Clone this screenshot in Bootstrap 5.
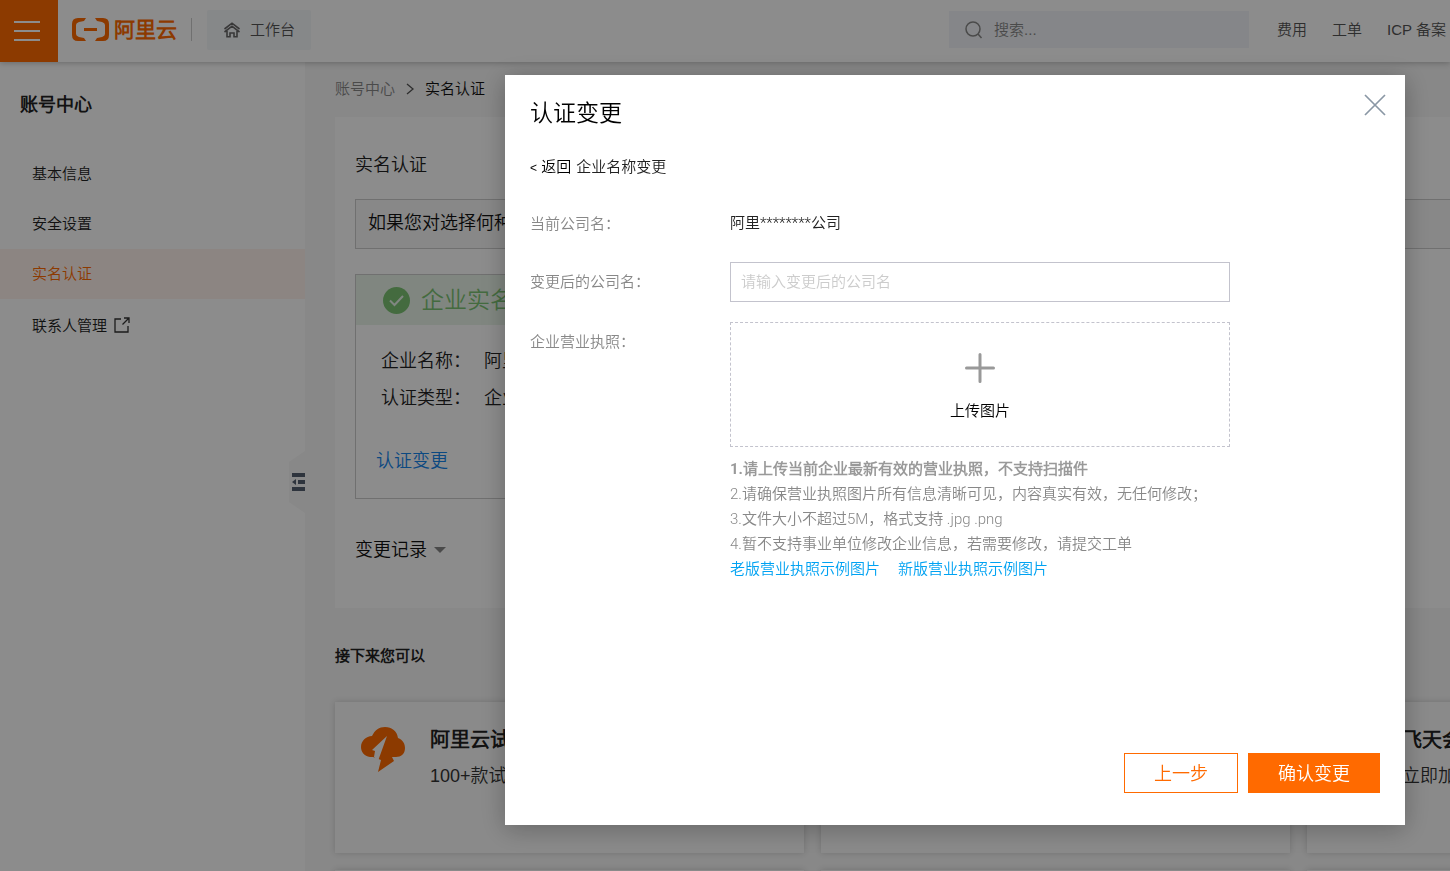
<!DOCTYPE html>
<html lang="zh-CN">
<head>
<meta charset="utf-8">
<meta name="viewport" content="width=device-width, initial-scale=1">
<title>实名认证</title>
<link href="https://cdn.jsdelivr.net/npm/bootstrap@5.3.0/dist/css/bootstrap.min.css" rel="stylesheet">
<style>
  :root { --brand: #ff6a00; --thin: 350; }
  body { font-family: "Liberation Sans", "Noto Sans CJK SC DemiLight", "Noto Sans CJK SC", sans-serif; font-size: 15px; font-weight: var(--thin); line-height: 25px; color: #222; background: #f7f7f7; height: 100vh; overflow: hidden; }
  a { text-decoration: none; color: inherit; }
  .fs-title { font-size: 23px; line-height: 30px; font-weight: var(--thin); }
  .fs-section { font-size: 18px; line-height: 26px; font-weight: var(--thin); }

  .topbar { height: 62px; background: #fff; box-shadow: 0 1px 6px rgba(0,0,0,.25); z-index: 2; position: relative; }
  .menu-btn { width: 58px; background: var(--brand); border: 0; padding: 0 4px 4px 0; }
  .top-row { padding-bottom: 3px; }
  .brand-link { margin-left: 14px; gap: 4px; }
  .brand-name { font-size: 21px; font-weight: 700; color: var(--brand); }
  .console-link { height: 40px; background: #f5f7fa; color: #555; border-radius: 2px; padding: 0 16px; margin-left: 15px; gap: 9px; }
  .v-line { width: 1px; height: 23px; background: #ccc; margin-left: 14px; }
  .search-box { width: 300px; height: 37px; background: #f2f5f9; padding-left: 16px; gap: 11px; color: #999; }
  .search-box input { background: none; border: 0; outline: 0; width: 220px; padding: 0; color: #888; font-weight: var(--thin); }
  .search-box input::placeholder { color: #888; }
  .top-links { gap: 25px; margin-left: 28px; padding-right: 4px; color: #555; }

  .sidebar { width: 305px; background: #fff; position: relative; padding-top: 30px; }
  .sidebar h2 { padding: 0 20px; margin-bottom: 31px; color: #222; }
  .sidebar .nav-link { height: 50px; padding: 0 32px 2px; color: #222; display: flex; align-items: center; gap: 7px; }
  .sidebar .nav-link.active { background: #fff3ed; color: var(--brand); }
  .sidebar .nav-link.outer { height: 54px; }
  .fold-btn { position: absolute; right: 0; top: 389px; border: 0; padding: 0; background: none; line-height: 0; }

  .content-wide { min-width: 1442px; padding: 14px 0 0 30px; }
  .crumbs { gap: 9px; margin-bottom: 16px; color: #111; }
  .crumbs a { color: #888; }
  .panel { background: #fff; padding: 35px 20px 45px; }
  .tip { height: 50px; border: 1px solid #ccc; background: #f7f7f7; padding: 0 12px 2px; margin: 21px 0 25px; color: #111; }
  .verify { border: 1px solid #ccc; height: 225px; margin-bottom: 38px; max-width: 900px; }
  .verify-head { height: 50px; background: #eaf5ea; color: #7cc474; padding-left: 27px; gap: 11px; }
  .verify dl { padding: 17px 25px 0; margin: 0; }
  .verify dl > div { height: 37px; gap: 12px; }
  .verify dt { font-weight: var(--thin); width: 91px; }
  .verify-link { color: #1585ec; margin: 32px 0 0 20px; display: inline-block; }
  .log-btn { border: 0; background: none; padding: 0; gap: 7px; color: #111; }
  .next-title { font-size: 15px; line-height: 25px; margin: 35px 0 34px; color: #222; }
  .next-grid { display: grid; grid-template-columns: repeat(3, 469px); gap: 17px; }
  .next-card { background: #fcfcfc; height: 151px; padding: 24px 25px; gap: 23px; box-shadow: 0 0 6px rgba(0,0,0,.16); color: #333; }
  .next-card h3 { font-size: 20px; line-height: 28px; font-weight: 700; margin: 0 0 9px; color: #222; }

  .modal { background: rgba(0,0,0,.45); overflow: hidden; }
  .change-dialog { max-width: 900px; margin: 75px 45px 46px auto; }
  .change-dialog .modal-content { border: 0; border-radius: 0; min-height: calc(100vh - 121px); padding: 23px 25px 32px; box-shadow: 0 4px 24px rgba(0,0,0,.28); }
  .close-btn { border: 0; background: none; padding: 0; width: 22px; height: 22px; line-height: 0; margin-right: -6px; margin-top: -4px; }
  .back-line { margin: 26px 0 30px; gap: 5px; }
  .back-line a { color: #000; }
  .back-line a span { font-size: 12px; }
  .field { display: grid; grid-template-columns: 200px 500px; margin-bottom: 20px; }
  .field > label, .field > .field-name { color: #888; padding-top: 7px; }
  .field.now { margin-bottom: 26px; }
  .field.now > .field-name { padding-top: 0; }
  .company, .notes { font-family: Roboto, "Noto Sans CJK SC DemiLight", "Noto Sans CJK SC", sans-serif; }
  .field .form-control { height: 40px; border: 1px solid #c3c3cd; border-radius: 0; padding: 0 10px 2px; font-size: 15px; font-weight: var(--thin); }
  .field .form-control::placeholder { color: #ccc; }
  .upload { height: 125px; width: 100%; border: 1px dashed #c3c3cd; background: #fff; color: #000; gap: 15px; padding: 7px 0 0; font-weight: var(--thin); }
  .notes { color: #888; margin-top: 10px; }
  .notes .fw-bold { color: #999; }
  .notes a { color: #00a2f2; }
  .note-links { gap: 18px; }
  .btn-row { gap: 10px; }
  .btn-flow { height: 40px; border-radius: 0; border: 1px solid var(--brand); padding: 1px 29px 0; line-height: 36px; font-size: 18px; font-weight: var(--thin); color: var(--brand); background: #fff; }
  .btn-flow.solid { background: var(--brand); color: #fff; }
</style>
</head>
<body class="d-flex flex-column">

<header class="topbar d-flex align-items-stretch flex-shrink-0">
  <button class="menu-btn" type="button" aria-label="菜单">
    <svg width="26" height="22" viewBox="0 0 26 22" stroke="#fff" stroke-width="2"><path d="M0 2h26M0 11h26M0 20h26"/></svg>
  </button>
  <div class="top-row d-flex align-items-center">
    <a href="#" class="brand-link d-flex align-items-center">
      <svg width="38" height="25" viewBox="0 0 38 25" fill="#ff6a00"><path d="M14 1H6Q0 1 0 7v11q0 6 6 6h8l-2-3-5-1q-3-1-3-3V8q0-2 3-3l5-1zM23 1h8q6 0 6 6v11q0 6-6 6h-8l2-3 5-1q3-1 3-3V8q0-2-3-3l-5-1zM12 11h13v3H12z"/></svg>
      <span class="brand-name">阿里云</span>
    </a>
    <span class="v-line"></span>
    <a href="#" class="console-link d-flex align-items-center">
      <svg width="18" height="16" viewBox="0 0 18 16" fill="none" stroke="#666" stroke-width="1.600"><path d="M1.500 7 9 1.200 16.500 7M1.500 10 9 4.200l7.500 5.800M4 9v5.800h3V11h4v3.800h3V9"/></svg>
      工作台
    </a>
  </div>
  <div class="top-row d-flex align-items-center ms-auto">
    <div class="search-box d-flex align-items-center">
      <svg width="18" height="18" viewBox="0 0 18 18" fill="none" stroke="#888" stroke-width="1.500"><circle cx="8" cy="8" r="7"/><path d="m13 13 3.500 4"/></svg>
      <input type="search" placeholder="搜索..." aria-label="搜索">
    </div>
    <nav class="top-links d-flex text-nowrap">
      <a href="#">费用</a><a href="#">工单</a><a href="#">ICP 备案</a>
    </nav>
  </div>
</header>

<div class="d-flex flex-grow-1 overflow-hidden">
  <aside class="sidebar flex-shrink-0">
    <h2 class="fs-section fw-bold">账号中心</h2>
    <nav class="nav flex-column">
      <a class="nav-link" href="#">基本信息</a>
      <a class="nav-link" href="#">安全设置</a>
      <a class="nav-link active" href="#">实名认证</a>
      <a class="nav-link outer" href="#">联系人管理
        <svg width="16" height="16" viewBox="0 0 16 16" fill="none" stroke="#333" stroke-width="1.300"><path d="M7 2H1v13h13V9M10 1h5v5M15 1 8.500 7.500"/></svg>
      </a>
    </nav>
    <button class="fold-btn" type="button" aria-label="收起">
      <svg width="16" height="62" viewBox="0 0 16 62"><path d="M16 0v62L0 51V11z" fill="#f7f7f7"/><path d="M3 22h13v4H3zM9 29h7v4H9zM3 36h13v4H3zM3 31l4-3v6z" fill="#556070"/></svg>
    </button>
  </aside>

  <main class="flex-grow-1 overflow-hidden">
    <div class="content-wide">
      <nav class="crumbs d-flex align-items-center" aria-label="breadcrumb">
        <a href="#">账号中心</a>
        <svg width="12" height="12" viewBox="0 0 12 12" fill="none" stroke="#555" stroke-width="1.300"><path d="m3 1 6 5-6 5"/></svg>
        <span>实名认证</span>
      </nav>
      <section class="panel">
        <h1 class="fs-section mb-0">实名认证</h1>
        <div class="tip fs-section d-flex align-items-center">如果您对选择何种</div>
        <div class="verify fs-section">
          <div class="verify-head fs-title d-flex align-items-center">
            <svg width="27" height="27" viewBox="0 0 27 27"><circle cx="13.500" cy="13.500" r="13.500" fill="#7cc474"/><path d="m7 13.500 4.500 4.500L20 9" fill="none" stroke="#eaf5ea" stroke-width="2"/></svg>
            企业实名
          </div>
          <dl>
            <div class="d-flex align-items-center"><dt>企业名称：</dt><dd class="mb-0">阿里</dd></div>
            <div class="d-flex align-items-center"><dt>认证类型：</dt><dd class="mb-0">企业</dd></div>
          </dl>
          <a href="#" class="verify-link">认证变更</a>
        </div>
        <button type="button" class="log-btn fs-section d-flex align-items-center">变更记录
          <svg width="12" height="6" viewBox="0 0 12 6"><path d="M0 0h12L6 6z" fill="#888"/></svg>
        </button>
      </section>
      <h2 class="next-title fw-bold">接下来您可以</h2>
      <div class="next-grid">
        <a href="#" class="next-card d-flex align-items-start">
          <svg width="47" height="47" viewBox="0 0 47 47" fill="#ff6a00"><path d="M13 31H10C4 30 1 26 1 21c0-6 5-11 11-11C15 4 19 1 25 1c7 0 12 4 13 11 5 2 7 6 7 10 0 6-4 9-9 9h-4l2 4-16 11 3-12z"/><path d="m27 10-9 25-4-4 1-6-3-1z" fill="#fcfcfc"/></svg>
          <div><h3>阿里云试</h3><div class="fs-section">100+款试</div></div>
        </a>
        <a href="#" class="next-card" aria-label="更多服务"></a>
        <a href="#" class="next-card d-flex align-items-start">
          <svg width="47" height="47" viewBox="0 0 47 47" fill="#ff6a00"><circle cx="23" cy="23" r="20"/></svg>
          <div><h3>飞天会</h3><div class="fs-section">立即加</div></div>
        </a>
        <a href="#" class="next-card" aria-label="更多服务"></a>
        <a href="#" class="next-card" aria-label="更多服务"></a>
        <a href="#" class="next-card" aria-label="更多服务"></a>
      </div>
    </div>
  </main>
</div>

<div class="modal show d-block" tabindex="-1" role="dialog" aria-labelledby="dlgTitle">
  <div class="modal-dialog change-dialog">
    <form class="modal-content">
      <div class="d-flex justify-content-between">
        <h2 class="fs-title mb-0 text-black" id="dlgTitle">认证变更</h2>
        <button type="button" class="close-btn" aria-label="关闭">
          <svg width="22" height="22" viewBox="0 0 22 22" stroke="#8a97a5" stroke-width="1.700"><path d="m1 1 20 20M21 1 1 21"/></svg>
        </button>
      </div>
      <div class="back-line d-flex"><a href="#"><span>&lt;</span> 返回</a><span>企业名称变更</span></div>
      <div class="field now"><span class="field-name">当前公司名：</span><span class="company">阿里********公司</span></div>
      <div class="field">
        <label for="newName">变更后的公司名：</label>
        <input id="newName" type="text" class="form-control" placeholder="请输入变更后的公司名">
      </div>
      <div class="field">
        <label for="license">企业营业执照：</label>
        <div>
          <button id="license" type="button" class="upload d-flex flex-column align-items-center justify-content-center">
            <svg width="30" height="30" viewBox="0 0 30 30" stroke="#999" stroke-width="3" stroke-linecap="round"><path d="M15 1.500v27M1.500 15h27"/></svg>
            上传图片
          </button>
          <div class="notes">
            <div class="fw-bold">1.请上传当前企业最新有效的营业执照，不支持扫描件</div>
            <div>2.请确保营业执照图片所有信息清晰可见，内容真实有效，无任何修改；</div>
            <div>3.文件大小不超过5M，格式支持 .jpg .png</div>
            <div>4.暂不支持事业单位修改企业信息，若需要修改，请提交工单</div>
            <div class="note-links d-flex"><a href="#">老版营业执照示例图片</a><a href="#">新版营业执照示例图片</a></div>
          </div>
        </div>
      </div>
      <div class="btn-row d-flex justify-content-end mt-auto">
        <button type="button" class="btn btn-flow">上一步</button>
        <button type="submit" class="btn btn-flow solid">确认变更</button>
      </div>
    </form>
  </div>
</div>

<script src="https://cdn.jsdelivr.net/npm/bootstrap@5.3.0/dist/js/bootstrap.bundle.min.js"></script>
</body>
</html>
